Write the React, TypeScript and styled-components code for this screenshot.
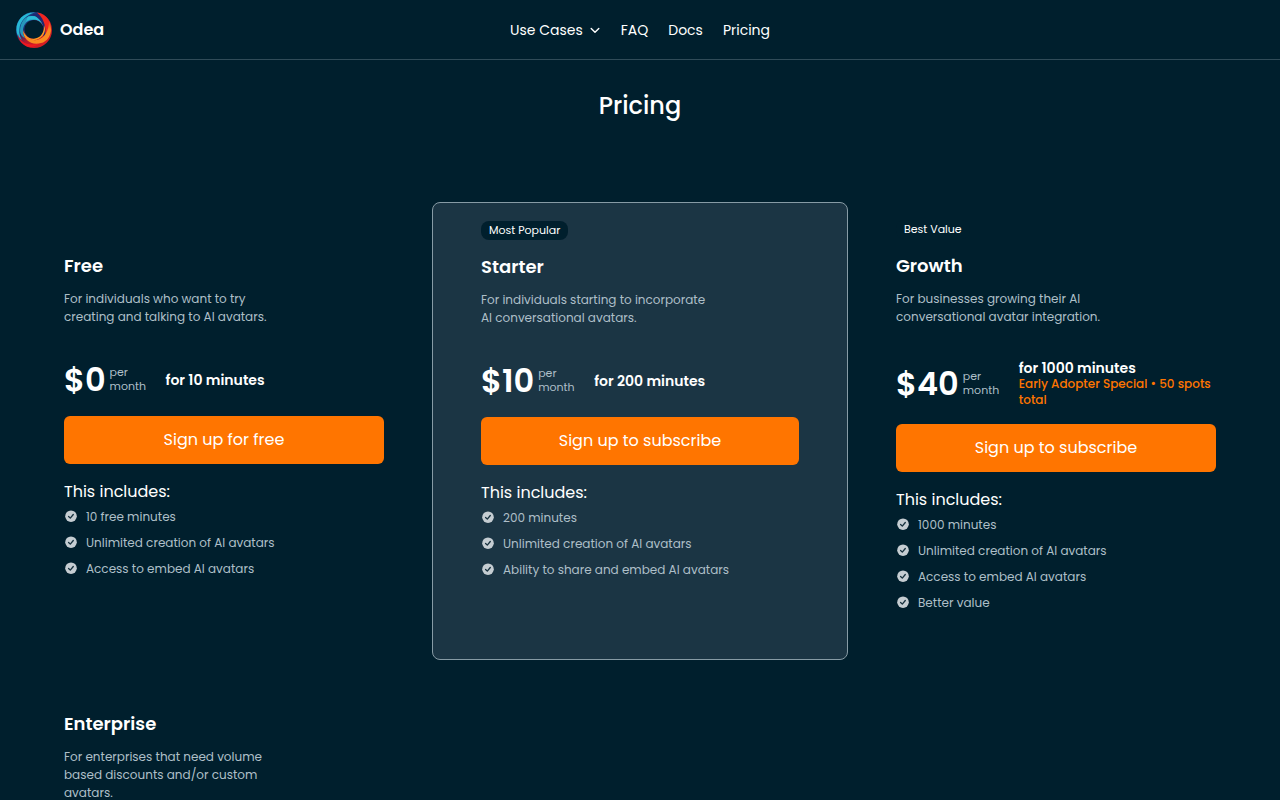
import React from "react";
import styled, { createGlobalStyle } from "styled-components";

const ink = "#001f2d";
const muted = "#aebfc8";
const orange = "#ff7500";

const GlobalStyle = createGlobalStyle`
  *, *::before, *::after { box-sizing: border-box; }
  body {
    margin: 0;
    background: ${ink};
    color: #fff;
    font-family: Poppins, Inter, "Open Sans", sans-serif;
    font-size: 16px;
    line-height: 24px;
  }
  h1, h2, h3, p, ul { margin: 0; padding: 0; }
`;

const Header = styled.header`
  display: grid;
  grid-template-columns: 1fr auto 1fr;
  align-items: center;
  height: 60px;
  padding: 0 16px;
  border-bottom: 1px solid #304b58;
`;

const Brand = styled.a`
  display: flex;
  align-items: center;
  gap: 8px;
  color: #fff;
  font-weight: 600;
  text-decoration: none;
`;

const Nav = styled.nav`
  display: flex;
  align-items: center;
  gap: 20px;
  font-size: 14px;
`;

const NavLink = styled.a`
  color: #fff;
  text-decoration: none;
`;

const NavButton = styled.button`
  display: flex;
  align-items: center;
  gap: 6px;
  padding: 0;
  border: 0;
  background: none;
  color: #fff;
  font: inherit;
  cursor: pointer;
`;

const Main = styled.main`
  padding: 30px 16px 0;
`;

const PageTitle = styled.h1`
  margin-bottom: 80px;
  font-size: 24px;
  font-weight: 500;
  line-height: 32px;
  text-align: center;
`;

const Plans = styled.div`
  display: grid;
  grid-template-columns: repeat(3, minmax(0, 1fr));
`;

const Card = styled.section<{ $featured?: boolean }>`
  padding: 18px 48px 48px;
  border-radius: 8px;
  border: ${(p) => (p.$featured ? "1px solid #879ba5" : "0")};
  background: ${(p) => (p.$featured ? "#1b3544" : "transparent")};
`;

const BadgeSlot = styled.div`
  display: flex;
  align-items: flex-start;
  height: 32px;
`;

const Badge = styled.span`
  padding: 0 8px;
  border-radius: 8px;
  background: ${ink};
  font-size: 11px;
  line-height: 19px;
`;

const PlanName = styled.h2`
  font-size: 18px;
  font-weight: 600;
  line-height: 28px;
`;

const Description = styled.p`
  max-width: 230px;
  min-height: 54px;
  margin: 10px 0 16px;
  color: ${muted};
  font-size: 12px;
  line-height: 18px;
`;

const PriceRow = styled.div`
  display: flex;
  align-items: center;
  min-height: 40px;
  margin-bottom: 16px;
`;

const Amount = styled.span`
  margin-right: 4px;
  font-size: 32px;
  font-weight: 600;
  line-height: 40px;
`;

const Period = styled.span`
  flex: none;
  width: 36px;
  margin-right: 20px;
  padding-bottom: 2px;
  color: ${muted};
  font-size: 11px;
  line-height: 14px;
`;

const Allowance = styled.div`
  font-size: 14px;
  font-weight: 600;
  line-height: 16px;
`;

const Special = styled.p`
  color: ${orange};
  font-size: 12px;
  font-weight: 500;
`;

const SignUp = styled.button`
  display: block;
  width: 100%;
  height: 48px;
  margin-bottom: 16px;
  border: 0;
  border-radius: 6px;
  background: ${orange};
  color: #fff;
  font: inherit;
  cursor: pointer;
`;

const IncludesTitle = styled.h3`
  margin-bottom: 4px;
  font-size: 16px;
  font-weight: 400;
  line-height: 24px;
`;

const Features = styled.ul`
  display: flex;
  flex-direction: column;
  gap: 8px;
  list-style: none;
`;

const Feature = styled.li`
  display: flex;
  align-items: center;
  gap: 8px;
  color: ${muted};
  font-size: 12px;
  line-height: 18px;
`;

function Logo() {
  return (
    <svg width="36" height="36" viewBox="0 0 36 36" aria-hidden="true">
      <defs>
        <linearGradient id="rim" x1="0" y1="0" x2="1" y2="1">
          <stop offset="0" stopColor="#1a5b9c" />
          <stop offset="0.35" stopColor="#1b2a72" />
          <stop offset="0.55" stopColor="#b8182e" />
          <stop offset="1" stopColor="#e8201c" />
        </linearGradient>
        <linearGradient id="sweep" x1="0" y1="0" x2="0" y2="1">
          <stop offset="0" stopColor="#f4391f" />
          <stop offset="0.4" stopColor="#fb8a20" />
          <stop offset="1" stopColor="#fb8a20" />
        </linearGradient>
      </defs>
      <path fillRule="evenodd" fill="url(#rim)" d="M18 0A18 18 0 1 1 18 36A18 18 0 1 1 18 0ZM18 8A9.5 9.5 0 1 0 18 27A9.5 9.5 0 1 0 18 8Z" />
      <path d="M0.4 18C0 8 8 0 19 0.5C10 3 4 9 3.5 17C3 22 4 25 6 28C2 25 0.4 22 0.4 18Z" fill="#27b9d5" />
      <path d="M4 19C4 9 10 3 18 4C24 5 28 9 28 15C25 9 21 7 16 8C10 9 7 13 7 19C7 22 8 24 9 26C6 25 4 22 4 19Z" fill="#2797bb" />
      <path d="M12 4.5C20 2 29 8 28.5 16C26 10 22 7.5 17 7.6C14 7.5 12 8 10 10C11 7 11 6 12 4.5Z" fill="#2bbdd8" />
      <path d="M16 2C24 1 31 7 31 15C31 20 30 23 27 25C29 18 28 8 16 2Z" fill="#20286f" />
      <path d="M21 0.5C31 2 36 10 34 20C33 24 31 26 28 28C31 20 30 8 21 0.5Z" fill="#f2261f" />
      <path d="M2 22C4 31 13 35 24 31C19 35 14 36 10 34C5 31 2 27 2 22Z" fill="#f01820" />
      <path d="M33 9C38 19 33 29 25 31C16 34 7 28 7 18C9 25 15 29 21 28C29 26 33 18 33 9Z" fill="url(#sweep)" />
      <path d="M28.5 13C31 21 25 28 18 28C12 28 8 24 7.5 20C10 25 14 27 18 26.8C24 26 28 22 28.5 13Z" fill="#ff9c22" />
    </svg>
  );
}

function Chevron() {
  return (
    <svg width="12" height="12" viewBox="0 0 12 12" fill="none" stroke="currentColor" strokeWidth="1.4" strokeLinecap="round" strokeLinejoin="round" aria-hidden="true">
      <path d="M2.2 4.4 6 8.2 9.8 4.4" />
    </svg>
  );
}

function CheckIcon() {
  return (
    <svg width="14" height="14" viewBox="0 0 14 14" aria-hidden="true">
      <circle cx="7" cy="6.2" r="5.8" fill="#c5cdd2" />
      <path d="M4.6 6.5 6.3 8.1 9.3 4.5" fill="none" stroke="#16303d" strokeWidth="1.3" strokeLinecap="round" strokeLinejoin="round" />
    </svg>
  );
}

interface Plan {
  name: string;
  description: string;
  badge?: string;
  featured?: boolean;
  price?: string;
  minutes?: string;
  special?: string;
  action?: string;
  features?: string[];
}

const plans: Plan[] = [
  {
    name: "Free",
    description: "For individuals who want to try creating and talking to AI avatars.",
    price: "$0",
    minutes: "for 10 minutes",
    action: "Sign up for free",
    features: ["10 free minutes", "Unlimited creation of AI avatars", "Access to embed AI avatars"],
  },
  {
    name: "Starter",
    description: "For individuals starting to incorporate AI conversational avatars.",
    badge: "Most Popular",
    featured: true,
    price: "$10",
    minutes: "for 200 minutes",
    action: "Sign up to subscribe",
    features: ["200 minutes", "Unlimited creation of AI avatars", "Ability to share and embed AI avatars"],
  },
  {
    name: "Growth",
    description: "For businesses growing their AI conversational avatar integration.",
    badge: "Best Value",
    price: "$40",
    minutes: "for 1000 minutes",
    special: "Early Adopter Special • 50 spots total",
    action: "Sign up to subscribe",
    features: ["1000 minutes", "Unlimited creation of AI avatars", "Access to embed AI avatars", "Better value"],
  },
  {
    name: "Enterprise",
    description: "For enterprises that need volume based discounts and/or custom avatars.",
  },
];

function PlanCard({ plan }: { plan: Plan }) {
  return (
    <Card $featured={plan.featured}>
      <BadgeSlot>{plan.badge && <Badge>{plan.badge}</Badge>}</BadgeSlot>
      <PlanName>{plan.name}</PlanName>
      <Description>{plan.description}</Description>
      {plan.price && (
        <PriceRow>
          <Amount>{plan.price}</Amount>
          <Period>per month</Period>
          <Allowance>
            <p>{plan.minutes}</p>
            {plan.special && <Special>{plan.special}</Special>}
          </Allowance>
        </PriceRow>
      )}
      {plan.action && <SignUp type="button">{plan.action}</SignUp>}
      {plan.features && (
        <>
          <IncludesTitle>This includes:</IncludesTitle>
          <Features>
            {plan.features.map((feature) => (
              <Feature key={feature}>
                <CheckIcon />
                {feature}
              </Feature>
            ))}
          </Features>
        </>
      )}
    </Card>
  );
}

export default function App() {
  return (
    <>
      <GlobalStyle />
      <Header>
        <Brand href="#">
          <Logo />
          Odea
        </Brand>
        <Nav>
          <NavButton type="button">
            Use Cases
            <Chevron />
          </NavButton>
          <NavLink href="#faq">FAQ</NavLink>
          <NavLink href="#docs">Docs</NavLink>
          <NavLink href="#pricing">Pricing</NavLink>
        </Nav>
      </Header>
      <Main>
        <PageTitle>Pricing</PageTitle>
        <Plans>
          {plans.map((plan) => (
            <PlanCard key={plan.name} plan={plan} />
          ))}
        </Plans>
      </Main>
    </>
  );
}
